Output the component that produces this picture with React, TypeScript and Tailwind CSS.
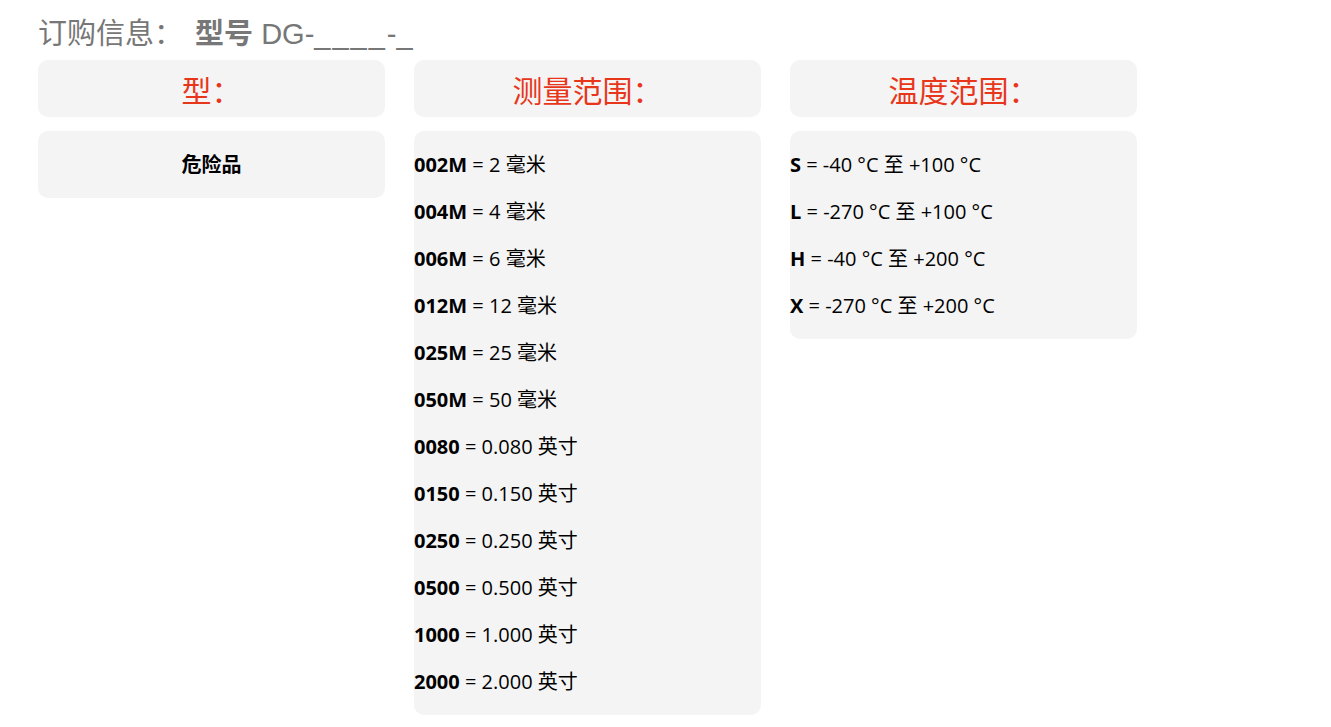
const sizes = [
  ["002M", "2 毫米"],
  ["004M", "4 毫米"],
  ["006M", "6 毫米"],
  ["012M", "12 毫米"],
  ["025M", "25 毫米"],
  ["050M", "50 毫米"],
  ["0080", "0.080 英寸"],
  ["0150", "0.150 英寸"],
  ["0250", "0.250 英寸"],
  ["0500", "0.500 英寸"],
  ["1000", "1.000 英寸"],
  ["2000", "2.000 英寸"],
];

const temps = [
  ["S", "-40 °C 至 +100 °C"],
  ["L", "-270 °C 至 +100 °C"],
  ["H", "-40 °C 至 +200 °C"],
  ["X", "-270 °C 至 +200 °C"],
];

const body = "font-['Open_Sans','Noto_Sans_CJK_SC',sans-serif] text-[20px] leading-[27px] text-black";

const Header = ({ title }: { title: string }) => (
  <div className="h-[57px] rounded-[10px] bg-[#f4f4f4] flex items-center justify-center">
    <span className="text-[30px] text-[#e8361b] font-['Noto_Sans_CJK_SC',sans-serif] leading-none">{title}</span>
  </div>
);

const Rows = ({ items }: { items: string[][] }) => (
  <div className={`mt-[14px] rounded-[10px] bg-[#f4f4f4] pt-5 flex flex-col ${body}`}>
    {items.map(([code, val]) => (
      <p key={code} className="mb-5">
        <b className="font-bold">{code}</b> = {val}
      </p>
    ))}
  </div>
);

export default function App() {
  return (
    <div className="bg-white min-h-screen pl-[38px] pt-[14px]">
      <h2 className="text-[29px] leading-[40px] text-[#777777] font-['Liberation_Sans','Noto_Sans_CJK_SC',sans-serif] mb-[6px]">
        订购信息：&nbsp;<span className="font-bold ml-[4px]">型号</span> DG-<span className="tracking-[2px]">____</span>-_
      </h2>
      <div className="grid grid-cols-[347px_347px_347px] gap-x-[29px] items-start">
        <div>
          <Header title="型：" />
          <div className={`mt-[14px] rounded-[10px] bg-[#f4f4f4] pt-5 flex flex-col ${body}`}>
            <p className="mb-5 text-center font-bold">危险品</p>
          </div>
        </div>
        <div>
          <Header title="测量范围：" />
          <Rows items={sizes} />
        </div>
        <div>
          <Header title="温度范围：" />
          <Rows items={temps} />
        </div>
      </div>
    </div>
  );
}
